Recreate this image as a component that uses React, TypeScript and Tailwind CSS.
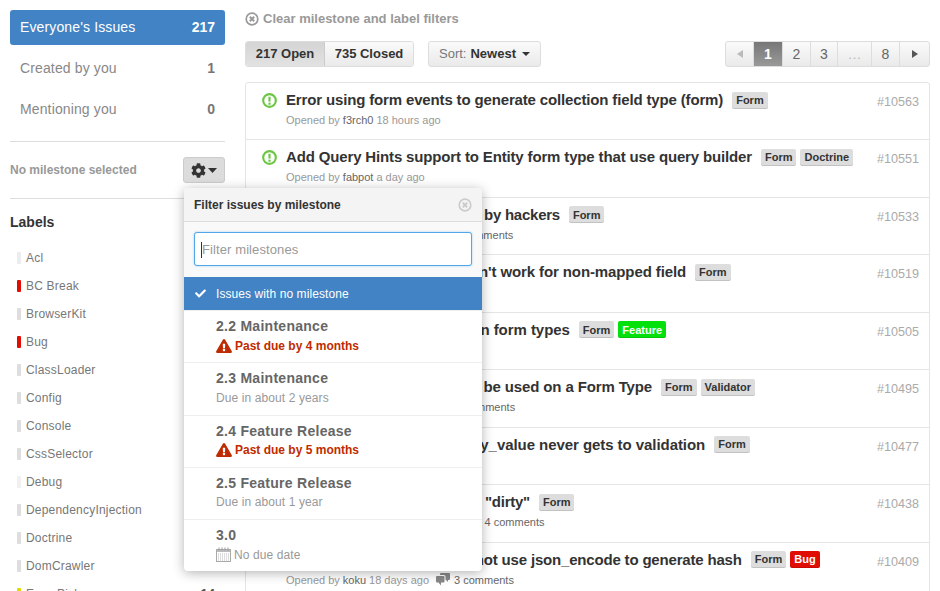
import React from "react";
import { FaCog, FaCheck, FaExclamationTriangle } from "react-icons/fa";

const font = { fontFamily: '"Liberation Sans", Arial, sans-serif' };

const labels: [string, string, string?][] = [
  ["Acl", "bg-[#ededed]"],
  ["BC Break", "bg-[#e10c02]"],
  ["BrowserKit", "bg-[#dddddd]"],
  ["Bug", "bg-[#e10c02]"],
  ["ClassLoader", "bg-[#dddddd]"],
  ["Config", "bg-[#dddddd]"],
  ["Console", "bg-[#dddddd]"],
  ["CssSelector", "bg-[#dddddd]"],
  ["Debug", "bg-[#f0f0f0]"],
  ["DependencyInjection", "bg-[#dddddd]"],
  ["Doctrine", "bg-[#dddddd]"],
  ["DomCrawler", "bg-[#dddddd]"],
  ["Easy Pick", "bg-[#dddd00]", "14"],
];

type Issue = { t: string; tags: string[]; n: string; by: string; ago: string; c?: string; tr: string };
const issues: Issue[] = [
  { t: "Error using form events to generate collection field type (form)", tags: ["Form"], n: "#10563", by: "f3rch0", ago: "18 hours ago", tr: "tracking-[-0.15px]" },
  { t: "Add Query Hints support to Entity form type that use query builder", tags: ["Form", "Doctrine"], n: "#10551", by: "fabpot", ago: "a day ago", tr: "tracking-[-0.15px]" },
  { t: "Form options can be altered by hackers", tags: ["Form"], n: "#10533", by: "stloyd", ago: "3 days ago", c: "5 comments", tr: "tracking-[-0.25px]" },
  { t: "Validations on groups doesn't work for non-mapped field", tags: ["Form"], n: "#10519", by: "stof", ago: "6 days ago", tr: "tracking-[-0.11px]" },
  { t: "Allow inherit_data options in form types", tags: ["Form", "Feature"], n: "#10505", by: "bschussek", ago: "8 days ago", tr: "tracking-[-0.05px]" },
  { t: "Custom Constraints cannot be used on a Form Type", tags: ["Form", "Validator"], n: "#10495", by: "fabpot", ago: "9 days ago", c: "2 comments", tr: "tracking-[-0.13px]" },
  { t: "Forms submitted with empty_value never gets to validation", tags: ["Form"], n: "#10477", by: "merk", ago: "12 days ago", tr: "tracking-[-0.06px]" },
  { t: "Mark all of the form fields as \"dirty\"", tags: ["Form"], n: "#10438", by: "webmozart", ago: "16 days ago", c: "4 comments", tr: "tracking-[-0.25px]" },
  { t: "The CSRF provider should not use json_encode to generate hash", tags: ["Form", "Bug"], n: "#10409", by: "koku", ago: "18 days ago", c: "3 comments", tr: "tracking-[-0.18px]" },
];

function Caret({ w, h, color }: { w: number; h: number; color: string }) {
  return (
    <svg width={w} height={h} viewBox="0 0 8 4" preserveAspectRatio="none" className="shrink-0">
      <path d="M0 0h8L4 4z" fill={color} />
    </svg>
  );
}

function Tri({ dir, color }: { dir: "l" | "r"; color: string }) {
  return (
    <svg width="6" height="8" viewBox="0 0 6 8">
      <path d={dir === "l" ? "M6 0v8L0 4z" : "M0 0v8l6-4z"} fill={color} />
    </svg>
  );
}

function OpenIcon() {
  return (
    <svg width="15" height="15" viewBox="0 0 14 14" className="shrink-0">
      <circle cx="7" cy="7" r="5.9" fill="none" stroke="#6cc644" strokeWidth="2" />
      <rect x="6" y="3.500" width="2" height="4.500" fill="#6cc644" />
      <rect x="6" y="9" width="2" height="2" fill="#6cc644" />
    </svg>
  );
}

function ClearIcon({ size, color }: { size: number; color: string }) {
  return (
    <svg width={size} height={size} viewBox="0 0 14 14" className="shrink-0">
      <circle cx="7" cy="7" r="5.8" fill="none" stroke={color} strokeWidth="1.7" />
      <path d="M4.800 4.800 L9.200 9.200 M9.200 4.800 L4.800 9.200" stroke={color} strokeWidth="2" />
    </svg>
  );
}

function CommentIcon() {
  return (
    <svg width="14" height="13" viewBox="0 0 14 13" className="shrink-0">
      <path d="M5 0h8a1 1 0 0 1 1 1v5a1 1 0 0 1-1 1h-1v2l-2-2H9.500V3.500A1.500 1.500 0 0 0 8 2H4V1a1 1 0 0 1 1-1z" fill="#888" />
      <path d="M1 3h6.500a1 1 0 0 1 1 1v4.500a1 1 0 0 1-1 1H5v3l-2.500-3H1a1 1 0 0 1-1-1V4a1 1 0 0 1 1-1z" fill="#888" />
    </svg>
  );
}

function CalendarIcon() {
  return (
    <svg width="15" height="15" viewBox="0 0 15 15" className="shrink-0">
      <rect x="0.500" y="2.500" width="14" height="12" fill="none" stroke="#aaa" />
      <rect x="1" y="3" width="13" height="2" fill="#bbb" />
      <path d="M3 0.500v3M6 0.500v3M9 0.500v3M12 0.500v3" stroke="#999" />
      <path d="M2 7h11M2 9h11M2 11h11M2 13h11" stroke="#bbb" strokeDasharray="1 1" />
    </svg>
  );
}

function Tag({ name }: { name: string }) {
  const c =
    name === "Feature"
      ? "bg-[#02e10c] text-white"
      : name === "Bug"
        ? "bg-[#e10c02] text-white"
        : "bg-[#dddddd] text-[#333]";
  return (
    <span className={`inline-flex items-center h-[17px] px-[4px] mr-[4px] rounded-[2px] text-[11px] font-bold shadow-[inset_0_-1px_0_rgba(0,0,0,0.12)] ${c}`}>
      {name}
    </span>
  );
}

function IssueRow({ i, last }: { i: Issue; last: boolean }) {
  return (
    <div className={`relative h-[57.45px] flex shrink-0 pl-[16px] pr-[10px] pt-[8px] ${last ? "" : "border-b border-[#e5e5e5]"}`}>
      <div className="pt-[2px] w-[24px]">
        <OpenIcon />
      </div>
      <div className="flex-1 min-w-0">
        <div className="flex items-center h-[18px] whitespace-nowrap">
          <span className={`text-[15px] leading-[18px] font-bold text-[#333] mr-[9px] ${i.tr}`}>{i.t}</span>
          {i.tags.map((t) => (
            <Tag key={t} name={t} />
          ))}
        </div>
        <div className="flex items-center mt-[4px] text-[11px] leading-[14px] text-[#999] whitespace-nowrap">
          <span>Opened by</span>
          <span className="text-[#666] ml-[3px]">{i.by}</span>
          <span className="ml-[3px]">{i.ago}</span>
          {i.c && (
            <>
              <span className="ml-[7px] mr-[4px]">
                <CommentIcon />
              </span>
              <span className="text-[#666]">{i.c}</span>
            </>
          )}
        </div>
      </div>
      <div className="text-[12.6px] leading-[14px] text-[#aaa] pt-[4px]">{i.n}</div>
    </div>
  );
}

function Milestone({ title, children }: { title: string; children: React.ReactNode }) {
  return (
    <div className="h-[52.3px] pl-[32px] pt-[6px] border-t border-[#eee] first:border-t-0">
      <div className="text-[14px] leading-[18px] font-bold tracking-[0.27px] text-[#666]">{title}</div>
      <div className="flex items-center gap-[3px] mt-[3px] h-[15px] text-[12px] tracking-[0.1px] text-[#999]">{children}</div>
    </div>
  );
}

function Past({ months }: { months: string }) {
  return (
    <>
      <FaExclamationTriangle className="text-[#bf2b00] w-[16px] h-[14px]" />
      <span className="font-bold text-[#bf2b00] tracking-normal">Past due by {months} months</span>
    </>
  );
}

function Pager() {
  const cell = "h-full flex items-center justify-center border-r border-[#ddd] text-[14px] text-[#666]";
  return (
    <div className="flex h-[26px] w-[205px] rounded-[3px] border border-[#ddd] bg-gradient-to-b from-[#fafafa] to-[#eaeaea] overflow-hidden">
      <div className={`${cell} w-[28px]`}><Tri dir="l" color="#bbb" /></div>
      <div className={`${cell} w-[29px] bg-gradient-to-b from-[#777] to-[#999] !text-white border-[#666] font-bold`}>1</div>
      <div className={`${cell} w-[28px]`}>2</div>
      <div className={`${cell} w-[27px]`}>3</div>
      <div className={`${cell} w-[34px] !text-[#bbb] text-[12px]`}>…</div>
      <div className={`${cell} w-[28px]`}>8</div>
      <div className={`${cell} flex-1 border-r-0`}><Tri dir="r" color="#555" /></div>
    </div>
  );
}

export default function App() {
  return (
    <div style={font} className="relative w-[940px] h-[591px] overflow-hidden bg-white flex items-start pl-[10px] pr-[10px]">
      <aside className="w-[215px] shrink-0 pt-[10px]">
        <div className="flex justify-between items-center h-[35px] px-[10px] rounded-[3px] bg-[#4183c4] text-white text-[14px]">
          <span className="tracking-[0.13px]">Everyone's Issues</span>
          <b>217</b>
        </div>
        <div className="flex justify-between items-center h-[41px] mt-[3px] px-[10px] text-[14px] text-[#888]">
          <span className="tracking-[0.13px]">Created by you</span>
          <b className="text-[#777]">1</b>
        </div>
        <div className="flex justify-between items-center h-[41px] px-[10px] text-[14px] text-[#888]">
          <span className="tracking-[0.13px]">Mentioning you</span>
          <b className="text-[#777]">0</b>
        </div>
        <div className="mt-[11px] border-t border-[#ddd] h-[57px] flex items-center justify-between">
          <span className="text-[12px] font-bold text-[#999]">No milestone selected</span>
          <div className="w-[42px] h-[26px] rounded-[3px] border border-[#ccc] bg-[#dcdcdc] flex items-center justify-center gap-[2px] text-[#333]">
            <FaCog className="w-[15px] h-[15px]" />
            <Caret w={9} h={5} color="#333" />
          </div>
        </div>
        <div className="border-t border-[#ddd] pt-[14px]">
          <div className="text-[14px] leading-[18px] font-bold text-[#333]">Labels</div>
          <ul className="mt-[13px]">
            {labels.map(([name, color, count]) => (
              <li key={name} className="h-[28px] flex items-center pl-[7px] pr-[10px] text-[12px] tracking-[0.2px] text-[#777]">
                <span className={`w-[4px] h-[12px] rounded-[1px] mr-[5px] ${color}`} />
                <span className="flex-1">{name}</span>
                {count && <b className="text-[13px] tracking-normal text-[#555]">{count}</b>}
              </li>
            ))}
          </ul>
        </div>
      </aside>

      <main className="ml-[20px] w-[685px] shrink-0 pt-[11px]">
        <div className="flex items-center gap-[4px] h-[15px] text-[13px] font-bold text-[#999]">
          <ClearIcon size={14} color="#999" />
          <span>Clear milestone and label filters</span>
        </div>
        <div className="flex mt-[15px] h-[26px] justify-between">
          <div className="flex gap-[14px]">
            <div className="flex w-[169px] text-[13px] font-bold text-[#333] rounded-[3px] border border-[#ddd] overflow-hidden">
              <div className="w-[79px] flex items-center justify-center bg-gradient-to-b from-[#d4d4d4] to-[#e2e2e2] border-r border-[#ccc]">217 Open</div>
              <div className="flex-1 flex items-center justify-center bg-gradient-to-b from-[#fafafa] to-[#eaeaea]">735 Closed</div>
            </div>
            <div className="w-[113px] flex items-center justify-center gap-[4px] text-[13px] rounded-[3px] border border-[#ddd] bg-gradient-to-b from-[#fafafa] to-[#eaeaea]">
              <span className="text-[#777]">Sort:</span>
              <b className="text-[#333]">Newest</b>
              <span className="ml-[2px]"><Caret w={8} h={4} color="#333" /></span>
            </div>
          </div>
          <Pager />
        </div>
        <div className="mt-[15px] border border-[#e5e5e5] rounded-[3px] flex flex-col">
          {issues.map((i, idx) => (
            <IssueRow key={i.n} i={i} last={idx === issues.length - 1} />
          ))}
        </div>
      </main>

      <div className="absolute left-[184px] top-[188px] w-[298px] h-[383px] bg-white rounded-[4px] overflow-hidden shadow-[0_2px_12px_rgba(0,0,0,0.3)]">
        <div className="h-[34px] flex items-center justify-between pl-[10px] pr-[10px] bg-[#f4f4f4] border-b border-[#ddd]">
          <span className="text-[12px] font-bold text-[#333]">Filter issues by milestone</span>
          <ClearIcon size={14} color="#ccc" />
        </div>
        <div className="h-[55px] bg-[#f9f9f9] px-[10px] pt-[10px]">
          <div className="h-[34px] pt-[1px] rounded-[3px] bg-white border border-[#51a7e8] shadow-[0_0_2px_rgba(81,167,232,0.6)] flex items-center pl-[6px] text-[13px] tracking-[0.1px] text-[#999]">
            <span className="w-px h-[16px] bg-[#333]" />
            Filter milestones
          </div>
        </div>
        <div className="h-[33px] bg-[#4183c4] flex items-center text-white text-[12px] tracking-[0.08px]">
          <FaCheck className="w-[11px] h-[11px] ml-[11px] mr-[10px]" />
          Issues with no milestone
        </div>
        <Milestone title="2.2 Maintenance"><Past months="4" /></Milestone>
        <Milestone title="2.3 Maintenance"><span>Due in about 2 years</span></Milestone>
        <Milestone title="2.4 Feature Release"><Past months="5" /></Milestone>
        <Milestone title="2.5 Feature Release"><span>Due in about 1 year</span></Milestone>
        <Milestone title="3.0"><CalendarIcon /><span>No due date</span></Milestone>
      </div>
    </div>
  );
}
